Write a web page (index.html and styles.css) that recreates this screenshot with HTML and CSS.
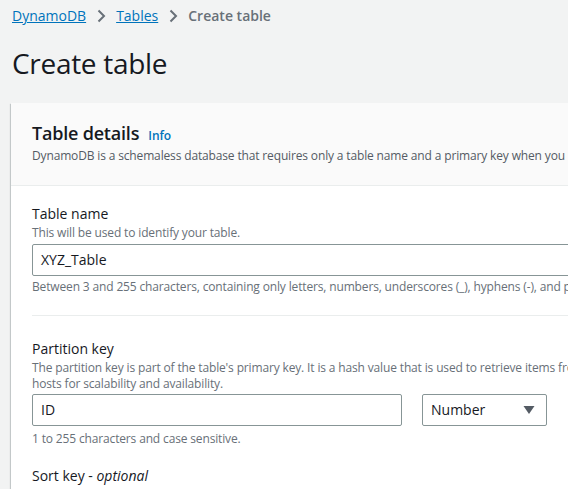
FILE: index.html
```html
<!DOCTYPE html>
<html>
<head>
<meta charset="utf-8">
<link rel="stylesheet" href="styles.css">
</head>
<body>
<div class="page">
  <nav class="crumbs">
    <a href="#">DynamoDB</a>
    <svg class="chev" width="16" height="16" viewBox="0 0 16 16"><path d="M5.5 2.5l5.5 5.5-5.5 5.5" fill="none" stroke="#687078" stroke-width="2"/></svg>
    <a href="#">Tables</a>
    <svg class="chev" width="16" height="16" viewBox="0 0 16 16"><path d="M5.5 2.5l5.5 5.5-5.5 5.5" fill="none" stroke="#687078" stroke-width="2"/></svg>
    <span class="current">Create table</span>
  </nav>
  <h1 class="title">Create table</h1>
  <section class="card">
    <header class="card-head">
      <div class="card-title"><h2>Table details</h2><a class="info" href="#">Info</a></div>
      <p class="card-desc">DynamoDB is a schemaless database that requires only a table name and a primary key when you create the table.</p>
    </header>
    <div class="card-body">
      <div class="field">
        <div class="label">Table name</div>
        <div class="desc">This will be used to identify your table.</div>
        <div class="input wide">XYZ_Table</div>
        <div class="hint">Between 3 and 255 characters, containing only letters, numbers, underscores (_), hyphens (-), and periods (.).</div>
      </div>
      <hr class="divider">
      <div class="field">
        <div class="label">Partition key</div>
        <div class="desc">The partition key is part of the table's primary key. It is a hash value that is used to retrieve items from your table and allocate data across<br>hosts for scalability and availability.</div>
        <div class="row">
          <div class="input key">ID</div>
          <div class="select">Number<svg width="12" height="10" viewBox="0 0 12 10"><path d="M0.5 1h11L6 9z" fill="#545b64"/></svg></div>
        </div>
        <div class="hint">1 to 255 characters and case sensitive.</div>
      </div>
      <div class="field sort">
        <div class="label">Sort key - <i>optional</i></div>
        <div class="desc">You can use a sort key as the second part of a table's primary key. The sort key allows you to sort or search among all items sharing the same partition key.</div>
      </div>
    </div>
  </section>
</div>
</body>
</html>
```
FILE: styles.css
```css
html, body {
  margin: 0;
  padding: 0;
  background: #f2f3f3;
  overflow: hidden;
}
body {
  font-family: "Open Sans", "Noto Sans", sans-serif;
  color: #16191f;
  width: 568px;
  height: 489px;
}
.page {
  padding: 6px 0 0 12px;
  width: 1000px;
}
.crumbs {
  display: flex;
  align-items: center;
  height: 20px;
  font-size: 14px;
  line-height: 20px;
}
.crumbs a {
  color: #0073bb;
  text-decoration: underline;
}
.chev {
  margin: 0 7px 0 7px;
}
.current {
  color: #687078;
  font-weight: 600;
}
.title {
  margin: 19px 0 0 0;
  font-size: 28px;
  line-height: 36px;
  font-weight: 400;
  letter-spacing: -0.3px;
}
.card {
  margin: 22px 0 0 -1px;
  width: 980px;
  background: #fff;
  box-shadow: 0 1px 1px 0 rgba(0,28,36,0.3), 1px 1px 1px 0 rgba(0,28,36,0.15), -1px 1px 1px 0 rgba(0,28,36,0.15);
}
.card-head {
  background: #fafafa;
  border-bottom: 1px solid #eaeded;
  padding: 17px 20px 21px 21px;
}
.card-title {
  display: flex;
  align-items: baseline;
}
.card-title h2 {
  margin: 0;
  font-size: 18px;
  line-height: 26px;
  font-weight: 600;
  letter-spacing: -0.2px;
}
.info {
  margin-left: 9px;
  font-size: 12px;
  font-weight: 600;
  color: #0073bb;
  text-decoration: none;
}
.card-desc {
  margin: 2px 0 0 0;
  font-size: 12px;
  line-height: 16px;
  color: #545b64;
  white-space: nowrap;
  letter-spacing: -0.15px;
}
.card-body {
  padding: 17px 20px 0 21px;
}
.label {
  font-size: 14px;
  line-height: 22px;
}
.desc {
  font-size: 12px;
  line-height: 16px;
  color: #687078;
  white-space: nowrap;
  letter-spacing: -0.15px;
}
.input, .select {
  box-sizing: border-box;
  height: 32px;
  border: 1px solid #879596;
  border-radius: 2px;
  background: #fff;
  font-size: 14px;
  line-height: 30px;
  padding: 0 8px;
}
.input.wide {
  margin-top: 3px;
  width: 900px;
}
.hint {
  margin-top: 3px;
  font-size: 12px;
  line-height: 16px;
  color: #687078;
  white-space: nowrap;
  letter-spacing: -0.15px;
}
.divider {
  border: 0;
  border-top: 1px solid #eaeded;
  margin: 20px 0 22px 0;
}
.row {
  display: flex;
  gap: 20px;
  margin: 2px 0 5px 0;
}
.input.key {
  width: 370px;
}
.select {
  width: 125px;
  display: flex;
  align-items: center;
  justify-content: space-between;
  padding-right: 11px;
  color: #16191f;
}
.sort {
  margin-top: 18px;
}
.sort i {
  font-style: italic;
}
```
